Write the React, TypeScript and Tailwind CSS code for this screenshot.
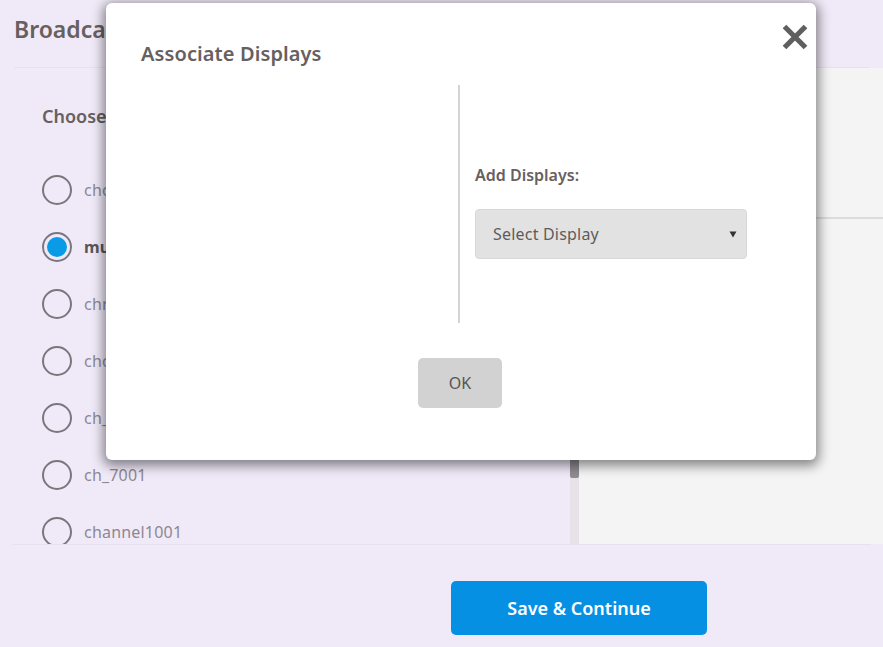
const channels = [
  { name: "choose_ch1", on: false },
  { name: "multicast_1", on: true },
  { name: "chrome_01", on: false },
  { name: "choice_02", on: false },
  { name: "ch_5001", on: false },
  { name: "ch_7001", on: false },
  { name: "channel1001", on: false },
];

function Radio({ on }: { on: boolean }) {
  return (
    <span className="flex h-[30px] w-[30px] shrink-0 items-center justify-center rounded-full border-2 border-[#7a767c]">
      {on && <span className="h-5 w-5 rounded-full bg-[#0a9be6]" />}
    </span>
  );
}

export default function App() {
  return (
    <div className="relative flex h-[647px] w-[883px] flex-col overflow-hidden bg-[#f0eaf8] font-['Noto_Sans',sans-serif]">
      <header className="mx-[14px] flex h-[68px] shrink-0 items-center border-b border-[#e6e1ed] pb-[8px]">
        <h1 className="text-[23px] font-semibold text-[#66605f]">Broadcast Setup</h1>
      </header>

      <main className="flex h-[476px] shrink-0 overflow-hidden">
        <section className="w-[570px] shrink-0 overflow-hidden pl-[42px] pt-[36px]">
          <h2 className="text-[18px] font-semibold leading-[24px] text-[#66605f]">Choose Channel</h2>
          <ul className="mt-[47px] flex flex-col gap-[27px]">
            {channels.map((c) => (
              <li key={c.name} className="flex h-[30px] items-center gap-[12px]">
                <Radio on={c.on} />
                <span className={`text-[16px] tracking-[0.2px] ${c.on ? "font-bold text-[#5a5558]" : "text-[#8d8891]"}`}>{c.name}</span>
              </li>
            ))}
          </ul>
        </section>

        <div className="w-[9px] shrink-0 bg-[#e6e2e8]">
          <div className="mt-[340px] h-[70px] rounded-b-[2px] bg-[#8f8c92]" />
        </div>

        <section className="flex-1 bg-[#f4f4f4]">
          <div className="flex h-[151px] items-end border-b-2 border-[#dcdcdc] pb-[24px] pl-[150px]">
            <span className="text-[16px] font-semibold text-[#66605f]">Displays</span>
          </div>
        </section>
      </main>

      <footer className="mx-[12px] flex flex-1 border-t border-[#e6e1ed] pl-[439px] pt-[36px]">
        <button className="h-[54px] w-[256px] rounded-[5px] bg-[#0690e4] text-[18px] font-semibold text-white">
          Save &amp; Continue
        </button>
      </footer>

      <div className="absolute left-[106px] top-[3px] flex h-[457px] w-[710px] flex-col rounded-[6px] bg-white shadow-[0_3px_12px_3px_rgba(0,0,0,0.45)]">
        <button className="absolute right-[7px] top-[20px] text-[#5f5f5f]" aria-label="Close">
          <svg width="28" height="28" viewBox="0 0 28 28">
            <path d="M3.5 3.5 L24.5 24.5 M24.5 3.5 L3.5 24.5" stroke="currentColor" strokeWidth="5.2" />
          </svg>
        </button>

        <h2 className="ml-[35px] mt-[37px] text-[20px] font-semibold leading-[28px] tracking-[0.1px] text-[#66605f]">Associate Displays</h2>

        <div className="mt-[17px] flex h-[238px]">
          <div className="w-[354px] shrink-0 border-r-2 border-[#d4d4d4]" />
          <div className="flex flex-col pl-[15px] pt-[78px]">
            <label className="text-[16px] font-semibold leading-[24px] text-[#66605f]">Add Displays:</label>
            <div className="mt-[22px] flex h-[50px] w-[272px] items-center justify-between rounded-[4px] border border-[#d8d8d8] bg-[#e2e2e2] pl-[17px] pr-[9px] text-[16px] tracking-[0.2px] text-[#5f5b5b]">
              <span>Select Display</span>
              <svg width="8" height="8" viewBox="0 0 8 8" className="text-[#333]">
                <path d="M0.5 1.5 H7.5 L4 7.5 Z" fill="currentColor" />
              </svg>
            </div>
          </div>
        </div>

        <div className="mt-[35px] flex justify-center pr-[2px]">
          <button className="h-[50px] w-[84px] rounded-[5px] bg-[#d2d2d2] text-[16px] text-[#555]">OK</button>
        </div>
      </div>
    </div>
  );
}
